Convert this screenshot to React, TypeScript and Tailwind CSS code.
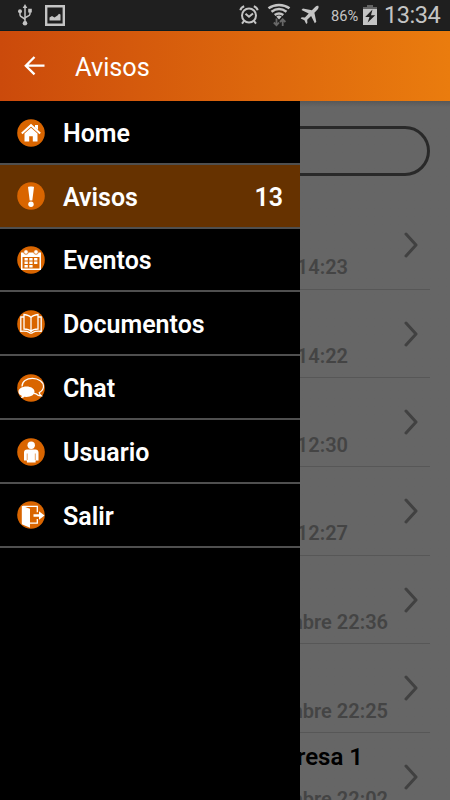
import type { ReactNode } from "react";

type MenuItem = {
  label: string;
  icon: ReactNode;
  count?: number;
};

type Notice = {
  title?: string;
  date: string;
  dateClass: string;
};

const MENU: MenuItem[] = [
  { label: "Home", icon: <HomeIcon /> },
  { label: "Avisos", icon: <AlertIcon />, count: 13 },
  { label: "Eventos", icon: <CalendarIcon /> },
  { label: "Documentos", icon: <BookIcon /> },
  { label: "Chat", icon: <ChatIcon /> },
  { label: "Usuario", icon: <UserIcon /> },
  { label: "Salir", icon: <ExitIcon /> },
];

const NOTICES: Notice[] = [
  { date: "14:23", dateClass: "w-[348px]" },
  { date: "14:22", dateClass: "w-[348px]" },
  { date: "12:30", dateClass: "w-[348px]" },
  { date: "12:27", dateClass: "w-[348px]" },
  { date: "mbre 22:36", dateClass: "w-[388px]" },
  { date: "mbre 22:25", dateClass: "w-[388px]" },
  { title: "presa 1", date: "mbre 22:02", dateClass: "w-[388px]" },
];

export default function App() {
  return (
    <div className="flex h-[800px] w-[450px] flex-col overflow-hidden bg-[#666] font-['Roboto',sans-serif]">
      <StatusBar />
      <header className="flex h-[70px] shrink-0 items-center bg-linear-to-r from-[#cb4a0b] to-[#ea7c0e] pl-[24px] text-white">
        <svg viewBox="0 0 22 20" className="h-5 w-[22px]" fill="none" stroke="currentColor" strokeWidth="2.3">
          <path d="M20.5 9.700H2M10.500 1 1.800 9.700l8.700 8.700" />
        </svg>
        <h1 className="pt-[3px] pl-[29px] text-[25.300px] leading-8">Avisos</h1>
      </header>
      <main className="relative min-h-0 flex-1 overflow-hidden">
        <NoticeList />
        <Drawer />
      </main>
    </div>
  );
}

// ---- Status bar ----
function StatusBar() {
  return (
    <div className="flex h-[31px] shrink-0 items-center border-b border-[#0c1c20] bg-[#1f1f1f] text-[#c4c4c4]">
      <svg viewBox="0 0 14 22" className="ml-[18px] h-[22px] w-[14px]" fill="none" stroke="currentColor" strokeWidth="1.5">
        <path d="M7 3v16M2 8v3c0 2.500 5 2.500 5 5M12 7v3c0 2.500-5 2.500-5 4.500" />
        <path d="M7 0 9.300 4H4.700z" fill="currentColor" stroke="none" />
        <circle cx="2" cy="7.3" r="2" fill="currentColor" stroke="none" />
        <path d="M10.200 4.800h3.600v3.600h-3.600z" fill="currentColor" stroke="none" />
        <circle cx="7" cy="19.3" r="2.3" fill="currentColor" stroke="none" />
      </svg>
      <svg viewBox="0 0 20 21" className="ml-[13px] h-[21px] w-5">
        <path d="M1.200 1.200h17.600v18.600H1.200z" fill="none" stroke="currentColor" strokeWidth="2.4" />
        <path d="M4.500 15.500v-3l2.500-1.500 2.500 1.500 3-2 1.500-1.800 1.500.8v6z" fill="currentColor" />
      </svg>
      <svg viewBox="0 0 20 20" className="ml-[174px] h-5 w-5" fill="none" stroke="currentColor" strokeWidth="2">
        <circle cx="10" cy="10.5" r="7" />
        <path d="m6.500 8.700 3.500 3 4-3.200M1.300 5.200c.5-1.800 2-3.300 3.900-3.900M18.700 5.200c-.5-1.800-2-3.300-3.900-3.900M5 16l-2 2.700M15 16l2 2.700" />
      </svg>
      <svg viewBox="0 0 24 24" className="ml-[8px] h-6 w-6" fill="none" stroke="currentColor" strokeWidth="2.6">
        <path d="M1.500 5.300c6.200-4.500 14.800-4.500 21 0M4.500 8.700c4.800-3.400 10.200-3.400 15 0M7.700 12c2.800-2 5.800-2 8.600 0" />
        <path d="m9.300 13.500 2.700 3 2.700-3c-1.600-1.200-3.800-1.200-5.400 0z" fill="currentColor" stroke="none" />
        <path d="M9.500 15.500v6M6.800 19.500l2.700 2.700 2.600-2.700M15.700 23v-6M13 19l2.700-2.700 2.700 2.700" stroke="#686868" strokeWidth="1.8" />
      </svg>
      <svg viewBox="0 0 20 20" className="ml-[9px] h-5 w-5" fill="currentColor">
        <path d="M18.700 1.200c-.8-.9-2.300-.4-3.300.6l-3.500 3.500-9-1.800L1.500 5l7.200 3.600-3.800 4-3.200-.3-1 1.100 3.700 1.800 1.800 3.800 1.200-1-.2-3.300 3.900-3.700 3.700 7.300 1.500-1.500-1.900-9 3.200-3.300c1-1 1.300-2.200.7-2.900z" />
      </svg>
      <span className="ml-[11px] w-[28px] pt-px text-[14.700px] leading-5">86%</span>
      <svg viewBox="0 0 14 20" className="ml-[4px] h-5 w-[14px]">
        <path d="M4 0h6v2h4v3H0V2h4z" fill="#646464" />
        <path d="M0 4h14v16H0z" fill="currentColor" />
        <path d="m9.500 4.500-7.300 7.500h4.300L4.700 17.500l7.500-7.300H8z" fill="#1f1f1f" />
      </svg>
      <span className="ml-[7px] text-[23.600px] leading-7 tracking-[-0.500px]">13:34</span>
    </div>
  );
}

// ---- Navigation drawer ----
function Drawer() {
  return (
    <nav className="absolute inset-y-0 left-0 w-[300px] bg-black">
      {MENU.map((item) => (
        <a
          key={item.label}
          className={`flex h-[63.800px] items-center border-b-2 border-[#4f4f4f] pt-[1.500px] pr-[17px] pl-[17px] text-[25px] font-semibold text-white ${
            item.count ? "bg-[#663200]" : ""
          }`}
        >
          <svg viewBox="0 0 28 28" className="h-7 w-7 shrink-0">
            <circle cx="14" cy="14" r="13.8" fill="#d96500" />
            {item.icon}
          </svg>
          <span className="flex-1 pt-[2px] pl-[18px]">{item.label}</span>
          {item.count && <span className="pt-[2px]">{item.count}</span>}
        </a>
      ))}
    </nav>
  );
}

// ---- Content dimmed behind the drawer ----
function NoticeList() {
  return (
    <div className="flex flex-col bg-linear-to-b from-[#585858] to-[#666] to-[6px] pt-[25px] pr-[20px]">
      <div className="ml-5 h-[50px] rounded-full border-[3px] border-[#292929]" />
      <div className="pt-[25px]">
        {NOTICES.map((notice) => (
          <div key={notice.date} className="relative flex h-[88.700px] flex-col justify-between border-b border-[#575757] pt-[9.500px] pb-[7.500px]">
            <p className="h-7 w-[363px] text-right text-[24px] leading-7 font-semibold text-black">{notice.title}</p>
            <p className={`text-right text-[20px] leading-7 font-semibold text-[#444] ${notice.dateClass}`}>
              {notice.date}
            </p>
            <svg viewBox="0 0 14 26" className="absolute top-[31px] right-[12px] h-[26px] w-[14px]" fill="none" stroke="#414141" strokeWidth="3" strokeLinecap="round" strokeLinejoin="round">
              <path d="m2 2 10 11L2 24" />
            </svg>
          </div>
        ))}
      </div>
    </div>
  );
}

// ---- Menu glyphs, drawn on a 28x28 disc ----
function HomeIcon() {
  return (
    <g fill="white">
      <path d="m7.500 14.500 6.500-5.800 6.500 5.800v8h-4.700v-5.300h-3.600v5.300H7.500z" />
      <path d="m4.800 14.600 9.200-8.400 9.200 8.400" fill="none" stroke="white" strokeWidth="2" />
      <path d="M18 6h3v5l-3-2.500z" />
    </g>
  );
}

function AlertIcon() {
  return (
    <g fill="white">
      <path d="M11 5c0-.8 6-.8 6 0l-1.700 13.500h-2.600z" />
      <circle cx="14" cy="22.3" r="2.7" />
    </g>
  );
}

function CalendarIcon() {
  return (
    <g fill="white">
      <path d="M4 6.500h20v17.500H4zm1.500 4.500v11.500h17V11z" fillRule="evenodd" />
      <path d="M7.500 12h3.300v2.400H7.500zm4.800 0h3.300v2.400h-3.300zm4.800 0h3.300v2.400h-3.300zM7.500 15.500h3.300v2.400H7.500zm4.800 0h3.300v2.400h-3.300zm4.800 0h3.300v2.400h-3.300zM7.500 19h3.300v2.400H7.500zm4.800 0h3.300v2.400h-3.300z" />
      <circle cx="9" cy="6" r="2.3" stroke="#d96500" strokeWidth=".8" />
      <circle cx="19" cy="6" r="2.3" stroke="#d96500" strokeWidth=".8" />
    </g>
  );
}

function BookIcon() {
  return (
    <g fill="none" stroke="white" strokeWidth="1.3">
      <path d="M14 7.500C12.500 5.500 9.500 4.800 7 4.500v14.500c3 0 5.500.7 7 2.500 1.500-1.800 4-2.500 7-2.500V4.500c-2.500.3-5.500 1-7 3zM14 7.500V21.500" />
      <path d="M7 7H3.800v14.300c4-.4 7 .2 8.500 1.200 1 .8 2.400.8 3.400 0 1.500-1 4.500-1.600 8.500-1.200V7H21" />
    </g>
  );
}

function ChatIcon() {
  return (
    <g>
      <path d="M5 12.500c0-5 4.500-8.200 10.500-8.200s11 3.700 11 8c0 3-1.800 5-4.300 6.300.2 1.300.8 2.300 2 3.200-2 .1-4-.8-5.300-2l-2-.5" fill="none" stroke="white" strokeWidth="1.200" />
      <path d="M9.500 12.500c4.500 0 8 2.200 8 5.200s-3.500 5.200-8 5.200l-2.200-.2C6.300 23.800 5 24 3.800 24c.7-.7 1-1.400.9-2.200-2-.9-3.200-2.300-3.200-4.100 0-3 3.500-5.200 8-5.200z" fill="white" />
    </g>
  );
}

function UserIcon() {
  return (
    <g fill="white">
      <circle cx="14.2" cy="7.2" r="3.7" />
      <path d="M10 11.500h8.500c1.800 0 3 1.200 3 3v8h-2.900v2H9.900v-2H7v-8c0-1.800 1.200-3 3-3z" />
      <path d="M10.200 15.500v6.500M18.300 15.500v6.500" stroke="#d96500" strokeWidth=".6" />
    </g>
  );
}

function ExitIcon() {
  return (
    <g fill="white">
      <path d="m4.800 4.800 8.200 3v19l-8.200-3.500z" />
      <path d="M6 5.300h14.300v6M20.300 18v4.200H13" fill="none" stroke="white" strokeWidth="1.3" />
      <path d="M16.500 13.200h5.500v-3l5.500 4.300-5.500 4.300v-3h-5.500z" />
    </g>
  );
}
